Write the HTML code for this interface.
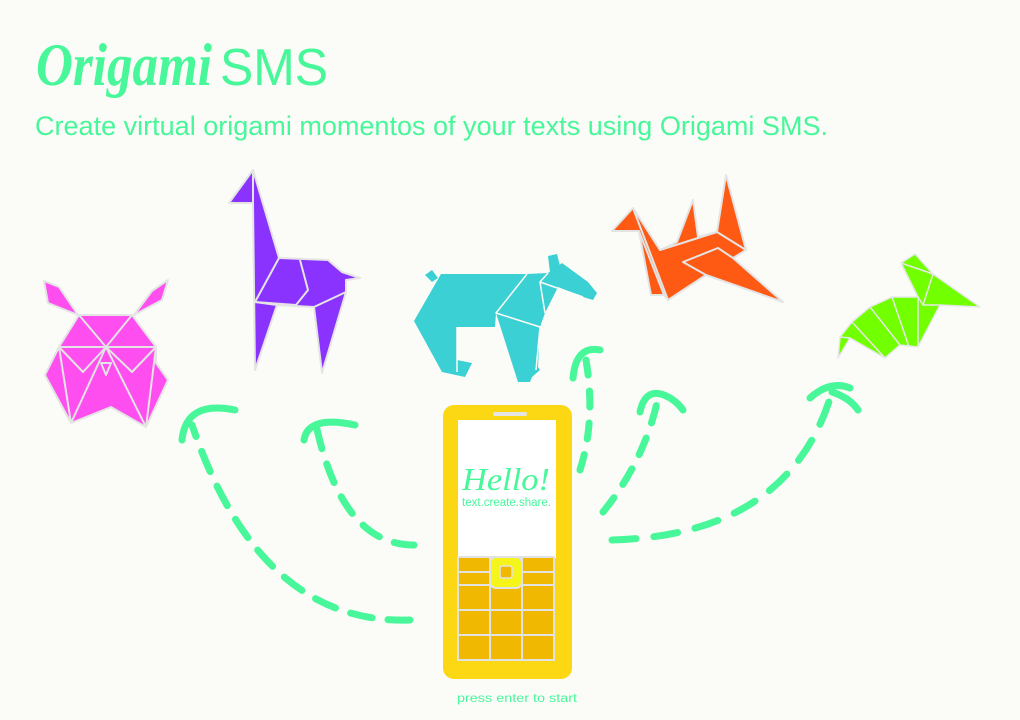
<!DOCTYPE html>
<html><head><meta charset="utf-8"><style>
html,body{margin:0;padding:0;background:#fbfbf7;}
svg{display:block}
</style></head><body>
<svg width="1020" height="720" viewBox="0 0 1020 720" xmlns="http://www.w3.org/2000/svg">
<rect width="1020" height="720" fill="#fbfbf7"/>
<g font-family="Liberation Sans, sans-serif" fill="#48f79a">
<text x="36" y="85" font-size="60" font-style="italic" font-weight="bold" font-family="Liberation Serif, serif" textLength="176" lengthAdjust="spacingAndGlyphs">Origami</text>
<text x="220" y="85" font-size="52" textLength="108" lengthAdjust="spacingAndGlyphs">SMS</text>
<text x="35" y="135" font-size="27" textLength="793" lengthAdjust="spacingAndGlyphs">Create virtual origami momentos of your texts using Origami SMS.</text>
</g>
<!-- owl -->
<g fill="#ff4ef0" stroke="#e4e4e4" stroke-width="2" stroke-linejoin="round">
<polygon points="44,281 59,287 78,315 48,303"/>
<polygon points="168,280 162,300 134,315 152,291"/>
<polygon points="79,315 132,315 156,347 156,363 168,380 146,427 111,407 71,423 45,375 59,347"/>
<polyline fill="none" points="59,347 156,347"/>
<polyline fill="none" points="79,315 106,347 132,315"/>
<polyline fill="none" points="59,347 83,372 106,347 132,372 156,347"/>
<polyline fill="none" points="106,347 71,423"/>
<polyline fill="none" points="106,347 146,427"/>
<polyline fill="none" points="59,347 71,423"/>
<polyline fill="none" points="156,347 146,427"/>
<polygon points="101,363 111,363 106,375"/>
</g>
<!-- giraffe -->
<g fill="#8a33ff" stroke="#e4e4e4" stroke-width="2" stroke-linejoin="round">
<polygon points="253,170 229,203 253,203"/>
<polygon points="253,170 279,258 328,260 342,272 360,278 346,280 346,292 322,373 314,307 277,305 255,370 253,203"/>
<polyline fill="none" points="279,258 255,302 296,305 308,290 300,260"/>
<polyline fill="none" points="255,302 277,305"/>
<polyline fill="none" points="314,307 346,292"/>
</g>
<!-- bear -->
<g fill="#3bd0d3" stroke="#fbfbf7" stroke-width="1.5" stroke-linejoin="round">
<polygon points="425,275 432,270 438,278 432,282" stroke="none"/>
<polygon points="548,256 557,254 560,266 550,272" stroke="none"/>
<polygon points="414,321 441,274 527,274 548,273 562,263 588,282 597,293 593,300 583,297 558,287 545,313 540,327 538,367 540,370 532,377 530,382 518,382 496,313 495,327 457,327 457,360 472,363 465,377 442,372" stroke="none"/>
<polyline fill="none" points="527,274 496,313 540,327 536,370"/>
<polyline fill="none" points="548,273 540,282 583,297"/>
<polyline fill="none" points="540,282 545,313"/>
<polyline fill="none" points="457,327 457,372"/>
</g>
<!-- crane -->
<g fill="#ff5a14" stroke="#e4e4e4" stroke-width="2" stroke-linejoin="round">
<polygon points="612,231 633,208 660,250 677,242 693,200 698,237 717,232 726,175 746,250 733,258 783,302 706,275 668,300 664,295 651,295 639,231"/>
<polyline fill="none" points="639,231 664,295"/>
<polyline fill="none" points="633,208 668,300"/>
<polyline fill="none" points="660,250 717,232 746,250"/>
<polyline fill="none" points="733,258 718,248 683,262 706,275"/>
</g>
<!-- armadillo -->
<g fill="#72ff00" stroke="#e8e8e8" stroke-width="1.5" stroke-linejoin="round">
<polygon points="838,358 840,337 852,322 870,307 892,297 918,297 901,263 915,254 933,274 980,307 940,305 918,347 900,345 885,358 850,338"/>
<polyline fill="none" points="840,337 850,338"/>
<polyline fill="none" points="852,322 885,358"/>
<polyline fill="none" points="870,307 900,345"/>
<polyline fill="none" points="892,297 909,347"/>
<polyline fill="none" points="918,297 918,347"/>
<polyline fill="none" points="918,297 923,305 940,305"/>
<polyline fill="none" points="901,263 933,274 923,305"/>
</g>
<!-- arrows -->
<g fill="none" stroke="#48f79a" stroke-width="7" stroke-linecap="round">
<path d="M410,620 Q260,625 192,425" stroke-dasharray="22 16"/>
<path d="M182,440 Q186,400 235,410"/>
<path d="M414,545 Q342,545 316,425" stroke-dasharray="20 16"/>
<path d="M304,440 Q308,415 355,425"/>
<path d="M580,470 Q596,420 586,360" stroke-dasharray="16 16"/>
<path d="M573,378 Q576,345 600,350"/>
<path d="M603,512 Q645,460 658,398" stroke-dasharray="18 16"/>
<path d="M640,412 Q645,388 664,395 M664,395 Q676,400 683,410"/>
<path d="M612,540 Q790,535 832,392" stroke-dasharray="24 18"/>
<path d="M810,398 Q830,380 850,388 M832,392 Q850,398 858,410"/>
</g>
<!-- phone -->
<rect x="443" y="405" width="129" height="274" rx="11" fill="#fcd714"/>
<rect x="458" y="420" width="98" height="138" fill="#ffffff"/>
<rect x="493" y="412" width="34" height="4" rx="2" fill="#e4e4e4"/>
<rect x="458" y="557" width="96" height="103" fill="#f0b800" stroke="#e2e2e2" stroke-width="2"/>
<g stroke="#e2e2e2" stroke-width="2" fill="none">
<path d="M458,572 H554 M458,585 H554 M458,610 H554 M458,635 H554 M490,557 V660 M522,557 V660"/>
</g>
<rect x="490" y="557" width="32" height="31" rx="6" fill="#f5f51a" stroke="#e2e2e2" stroke-width="2"/>
<rect x="500" y="566" width="12" height="12" rx="2" fill="#f0b800" stroke="#e2e2e2" stroke-width="1.5"/>
<g font-family="Liberation Sans, sans-serif" fill="#48f79a">
<text x="462" y="490" font-size="32" font-style="italic" font-family="Liberation Serif, serif" textLength="88" lengthAdjust="spacingAndGlyphs">Hello!</text>
<text x="462" y="506" font-size="11.5" textLength="89" lengthAdjust="spacingAndGlyphs">text.create.share.</text>
<text x="457" y="702" font-size="11.5" textLength="120" lengthAdjust="spacingAndGlyphs">press enter to start</text>
</g>
</svg>
</body></html>
